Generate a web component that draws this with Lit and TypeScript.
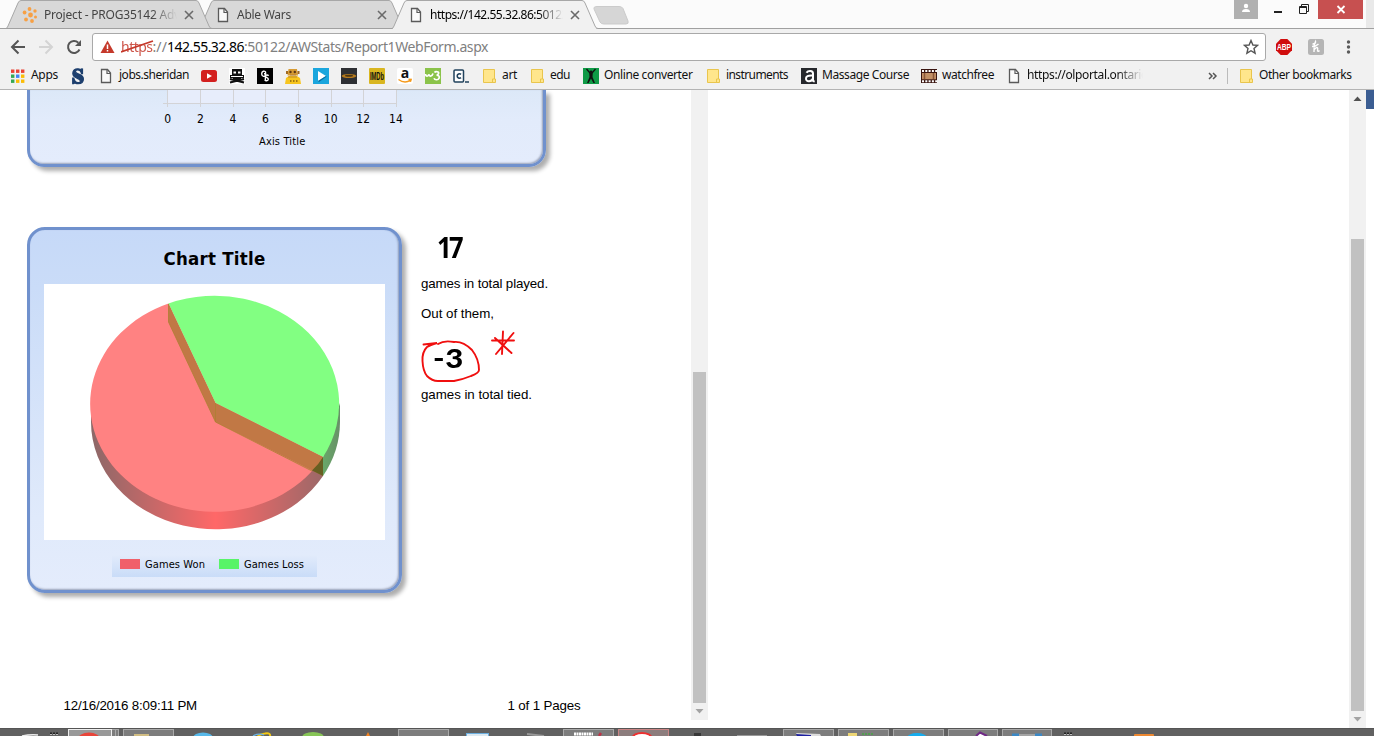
import { LitElement, html, svg, css } from "lit";
import { customElement, property } from "lit/decorators.js";

const UI = '"Noto Sans", "Open Sans", sans-serif';
const TAHOMA = '"DejaVu Sans Condensed", "DejaVu Sans", sans-serif';
const ARIAL = '"Liberation Sans", Arial, sans-serif';

const pen = document.createElement("canvas").getContext("2d")!;

/** One line of text whose tracking is adjusted to fill a given width. */
const label = (text: string, width: number, font: string, cls = "") => {
  pen.font = font;
  const track = (width - pen.measureText(text).width) / text.length;
  return html`<span class="label ${cls}" style="font:${font};letter-spacing:${track.toFixed(3)}px;width:${width}px">${text}</span>`;
};
const ui = (t: string, w: number, cls = "") => label(t, w, `12px ${UI}`, cls);

const shared = css`
  .label { display: block; white-space: pre; flex: none; }
  svg { display: block; flex: none; }
`;

const page = svg`<path d="M3.500 1.500h6l3 3.500v9.500h-9z" fill="#fafafa" stroke="#5a5a5a" stroke-width="1.300"/><path d="M9 1.500V5.500h3.500" fill="none" stroke="#5a5a5a" stroke-width="1.200"/>`;
const folder = svg`<path d="M2.500 1.500h11v9.500h1v3.500h-12z" fill="#ffe68c" stroke="#e9c54d"/><path d="M11.500 14v-3h2" fill="none" stroke="#e9c54d"/>`;

const icons: Record<string, unknown> = {
  page,
  folder,
  apps: svg`${[0, 1, 2].map((r) => [0, 1, 2].map((c) => svg`<rect x=${1 + c * 5} y=${1.5 + r * 5} width="3.400" height="3.400" fill=${["#ea4335", "#ea4335", "#ea4335", "#34a853", "#4285f4", "#fbbc05", "#34a853", "#fbbc05", "#fbbc05"][r * 3 + c]}/>`))}`,
  sheridan: svg`<path d="M12.500 1v4.600h-1C10.800 3 9.500 1.900 7.800 1.900 6.400 1.900 5.500 2.600 5.500 3.600c0 1.100.8 1.600 3.200 2.500 3.300 1.200 4.700 2.400 4.700 4.900 0 2.900-2.100 4.700-5.200 4.700-1.300 0-2.400-.4-3.400-.8l-1.300.7H2.700V10h1c.7 3 2.200 4.700 4.300 4.700 1.500 0 2.400-.7 2.400-1.800 0-1.200-.7-1.700-3.500-2.800C4.100 9 2.800 7.600 2.800 5.300 2.800 2.500 4.800.8 7.700.8c1.200 0 2.300.4 2.900.8L11.700.9z" fill="#1d3f6e" stroke="#1d3f6e" stroke-width="1.200"/>`,
  youtube: svg`<rect x="0" y="2" width="16" height="12" rx="2.500" fill="#d3201f"/><path d="M6 5.200v5.600L11 8z" fill="#fff"/>`,
  skull: svg`<rect width="16" height="16" fill="#fff"/><path d="M3 1h10v6h2v3H1V7h2z" fill="#111"/><path d="M4.500 3.500h2.500v2H4.500zM9 3.500h2.500v2H9zM2 8h12v1H2z" fill="#fff"/><path d="M1 11l14 3.500M15 11l-14 3.500" stroke="#111" stroke-width="2"/><path d="M4 9.500h8v2.500H4z" fill="#111"/>`,
  gs: svg`<rect width="16" height="16" fill="#000"/><path d="M8.800 4.300C7.800 2.300 4.500 3 4.700 6c.2 3 3.300 3 3.900 1V5.800H7M11.600 7.800c-1-1.300-3.300-.8-3 .8.3 1.300 2.800 1 2.700 2.700-.2 2-2.800 1.900-3.500.4M8.600 4l-.3 9" fill="none" stroke="#fff" stroke-width="1.400"/>`,
  robot: svg`<path d="M3.500 1h8.500l1 6.500H2.500z" fill="#d79b33"/><path d="M0 16l1-6 3-2h8l3 2 1 6z" fill="#f7c51e"/><path d="M1 3h2v3H1zM12.500 3h2v3h-2z" fill="#a06a23"/><circle cx="5.500" cy="4" r="1.200" fill="#5d3715"/><circle cx="9.800" cy="4" r="1.200" fill="#5d3715"/><path d="M5 7h6M3 9h9" stroke="#a8702a" stroke-width=".7"/><path d="M5 13h1.500M8 13h1.500M11 13h1.500" stroke="#866010" stroke-width="1.500"/>`,
  play: svg`<rect width="16" height="16" fill="#1ba6dd"/><path d="M5 3v10l8-5z" fill="#fff"/><path d="M5 13l8-5 .5.8L6 14z" fill="#0c6ca0"/>`,
  dark: svg`<rect width="16" height="16" fill="#2d2f33"/><ellipse cx="8" cy="8" rx="7.300" ry="2" fill="#b57a1d"/><ellipse cx="8" cy="7.800" rx="4" ry="1" fill="#4b3512"/>`,
  imdb: svg`<rect width="16" height="16" rx="1" fill="#d9b620"/><text x="1" y="12" font-family="Liberation Sans" font-weight="bold" font-size="10.500" textLength="14" lengthAdjust="spacingAndGlyphs" fill="#111">IMDb</text>`,
  amazon: svg`<rect width="16" height="16" rx="2" fill="#fff"/><text x="3.800" y="10.300" font-family="Open Sans" font-weight="bold" font-size="14" fill="#111">a</text><path d="M1.500 11.500c4 3 8.500 3 12 .7M11.500 11.200l2.700.2-.8 2.500" fill="none" stroke="#f59a1c" stroke-width="1.400"/>`,
  w3: svg`<rect width="16" height="16" fill="#8bc34a"/><path d="M.5 6c.3 3 3 2.700 3.200.2.300 2.500 3.300 2.800 4.300-.7M9.500 4.500c1-1.500 5-1 4 1.200-.5 1.200-1.200 1.500-2 1.500 2 0 3.500 1.200 2.500 3.200-1 2-4.300 1.600-5-.2" fill="none" stroke="#fff" stroke-width="1.700"/>`,
  codec: svg`<rect x="1" y="2" width="9.500" height="12" rx="1" fill="#fff" stroke="#21425c" stroke-width="1.500"/><path d="M8 6.300C6.500 5 4.200 6 4.200 8s2.300 3 3.800 1.700" fill="none" stroke="#21425c" stroke-width="1.600"/><path d="M12 14h4" stroke="#21425c" stroke-width="1.500"/>`,
  converter: svg`<rect width="16" height="16" fill="#0f9a46"/><path d="M3.500 1l3.500 4M12.500 1L9 5" stroke="#111" stroke-width="1.300"/><circle cx="8" cy="3.700" r="1.300" fill="#111"/><path d="M6.200 4.500h3.600L9.500 9l2.500 6h-1.600L8 10.500 5.600 15H4L6.500 9z" fill="#111"/>`,
  massage: svg`<rect width="16" height="16" fill="#26282c"/><path d="M5.500 4.800C7 2.500 12 2.300 12 5.500V12c0 1.200.6 1.500 1.700 1.300M12 7.500C7 7 4.700 8.500 5 11c.4 3 5.500 3 7-.5" fill="none" stroke="#fff" stroke-width="2"/>`,
  film: svg`<rect y="1" width="16" height="14" fill="#3a1510"/><rect x="1" y="5" width="14" height="6.300" fill="#c29066"/><path d="M3.500 5v6M12.500 5v6" stroke="#8a5638" stroke-width="1.500"/><path d="M1 3h15M1 13.300h15" stroke="#fff" stroke-width="2" stroke-dasharray="2 1.300"/>`,
};
const icon = (name: string) => html`<svg width="16" height="16" viewBox="0 0 16 16" overflow="visible">${icons[name]}</svg>`;

@customElement("browser-tab")
class BrowserTab extends LitElement {
  @property() text = "";
  @property() kind = "page";
  @property({ type: Number }) textwidth = 100;
  @property({ type: Boolean }) active = false;
  static styles = [shared, css`
    :host { display: block; width: 206px; height: 29px; margin-right: -13px; position: relative; flex: none; }
    .shape { position: absolute; inset: 0; }
    .row { position: relative; display: flex; align-items: center; height: 30px; padding-left: 16px; }
    .clip { width: 133px; margin-left: 6px; padding-bottom: 1px; overflow: hidden; color: #444; -webkit-mask-image: linear-gradient(90deg, #000 108px, transparent 133px); }
    .on { color: #000; }
    .close { margin-left: 7px; }
  `];
  render() {
    const fill = this.active ? "#f1f1f1" : "#d8d8d8";
    return html`
      <svg class="shape" width="206" height="29"><path d="M0 28.500Q1 28.500 2 26L12 3Q13 .5 15 .5H190Q192 .5 193 3L203 26Q204 28.500 206 28.500" fill=${fill} stroke="#a7a7a7"/>${this.active ? svg`<path d="M1 28.500h203" stroke="#f1f1f1"/>` : svg`<path d="M0 28.500h206" stroke="#a0a0a0"/>`}</svg>
      <div class="row">
        ${this.kind === "page"
          ? icon("page")
          : html`<svg width="16" height="16" viewBox="0 0 16 16" fill="#f7a044">
              <circle cx="8.500" cy="8" r="2.400" /><circle cx="7.500" cy="2" r="1.900" /><circle cx="2.600" cy="5.500" r="1.900" /><circle cx="4" cy="12.500" r="1.900" /><circle cx="10" cy="14" r="1.900" /><circle cx="13.500" cy="10" r="1.500" /><circle cx="13" cy="4" r="1.700" /></svg>`}
        <div class="clip ${this.active ? "on" : ""}">${ui(this.text, this.textwidth)}</div>
        <svg class="close" width="10" height="10"><path d="M1 1l8 8M9 1L1 9" stroke="#6a6a6a" stroke-width="1.600" /></svg>
      </div>`;
  }
}

@customElement("scroll-bar")
class ScrollBar extends LitElement {
  @property({ type: Number }) start = 0;
  @property({ type: Number }) size = 0;
  @property({ type: Boolean }) up = false;
  static styles = [shared, css`
    :host { display: flex; flex-direction: column; align-items: center; width: 17px; background: #f1f1f1; flex: none; }
    .thumb { width: 13px; background: #c1c1c1; }
    .top { width: 17px; }
  `];
  render() {
    return html`
      <div class="top" style="height:${this.start}px">${this.up ? html`<svg width="17" height="17"><path d="M4.500 11l4-4.500 4 4.500z" fill="#505050" /></svg>` : ""}</div>
      <div class="thumb" style="height:${this.size}px"></div>
      <svg width="17" height="17"><path d="M4.500 6h8l-4 4.500z" fill="#a3a3a3" /></svg>`;
  }
}

interface Mark { icon: string; width: number; text?: string; tw?: number; fade?: boolean; }
const marks: Mark[] = [
  { icon: "apps", width: 60, text: "Apps", tw: 27 },
  { icon: "sheridan", width: 28 },
  { icon: "page", width: 103, text: "jobs.sheridan", tw: 70 },
  ...["youtube", "skull", "gs", "robot", "play", "dark", "imdb", "amazon", "w3", "codec"].map((i) => ({ icon: i, width: 28 })),
  { icon: "folder", width: 48, text: "art", tw: 15 },
  { icon: "folder", width: 54, text: "edu", tw: 20 },
  { icon: "converter", width: 122, text: "Online converter", tw: 88.5 },
  { icon: "folder", width: 96, text: "instruments", tw: 62 },
  { icon: "massage", width: 120, text: "Massage Course", tw: 87 },
  { icon: "film", width: 85, text: "watchfree", tw: 52 },
  { icon: "page", width: 196, text: "https://olportal.ontario", tw: 121, fade: true },
];

@customElement("browser-chrome")
class BrowserChrome extends LitElement {
  static styles = [shared, css`
    :host { display: block; height: 90px; background: #f1f1f1; }
    .strip { display: flex; height: 29px; box-sizing: border-box; background: linear-gradient(#a0a0a0, #a0a0a0) bottom / 100% 1px no-repeat #fbfbfb; padding-left: 6px; }
    .t1 { z-index: 2; } .t2 { z-index: 1; } .t3 { z-index: 3; }
    .newtab { margin: 6px 0 0 8px; }
    .win { margin-left: auto; display: flex; }
    .edge { width: 8px; height: 28px; background: #e9e9e9; margin-left: 3px; }
    .toolbar { display: flex; align-items: center; height: 36px; }
    .nav { width: 92px; height: 16px; }
    .omni { display: flex; align-items: center; box-sizing: border-box; width: 1174px; height: 28px; border: 1px solid #a9a9a9; border-radius: 3px; background: #fff; padding-left: 7px; }
    .url { display: flex; margin-left: 6px; padding-bottom: 1px; color: #808080; position: relative; }
    .bad { color: #c5392b; opacity: .85; } .host { color: #000; }
    .slash { position: absolute; left: 0; top: 0; }
    .star { margin: 0 6px 0 auto; }
    .exts { display: flex; align-items: center; gap: 16px; margin-left: 10px; }
    .marks { display: flex; align-items: center; box-sizing: border-box; height: 25px; padding: 0 0 3px 10px; border-bottom: 1px solid #b4b4b4; color: #111; }
    .mark { display: flex; align-items: center; gap: 5px; flex: none; height: 16px; }
    .mark .label { margin-bottom: 2px; }
    .fade { -webkit-mask-image: linear-gradient(90deg, #000 90px, transparent 116px); }
    .sep { width: 1px; height: 16px; background: #bbb; margin: 0 10px 0 9px; }
    .more { margin-left: 6px; }
  `];
  render() {
    return html`
      <div class="strip">
        <browser-tab class="t1" kind="hub" text="Project - PROG35142 Adv" textwidth="136"></browser-tab>
        <browser-tab class="t2" text="Able Wars" textwidth="54"></browser-tab>
        <browser-tab class="t3" active text="https://142.55.32.86:50122" textwidth="138"></browser-tab>
        <svg class="newtab" width="36" height="19"><path d="M1 1.500q1-1 3-1H26q3 0 4 2l5 12.500q1 3-2 3H11q-3 0-4-2L1 3z" fill="#d6d6d6" stroke="#cbcbcb" /></svg>
        <div class="win">
          <svg width="129" height="19">
            <rect width="24" height="19" fill="#b0b0b0" /><circle cx="12" cy="6" r="2.200" fill="#fff" /><path d="M8 12q0-3 4-3t4 3z" fill="#fff" />
            <rect x="40" y="11" width="8" height="2" fill="#222" />
            <path d="M65.500 6.500h7v7h-7zM65 7.500h8M67.500 6V4.500h7v7H73" fill="none" stroke="#222" />
            <rect x="84" width="45" height="19" fill="#c75050" /><path d="M103.500 6l7 7M110.500 6l-7 7" stroke="#fff" stroke-width="1.800" />
          </svg>
          <div class="edge"></div>
        </div>
      </div>
      <div class="toolbar">
        <svg class="nav" width="92" height="16" fill="none" stroke-width="2">
          <path d="M25 8H12.500M18.500 1.500L12 8l6.500 6.500" stroke="#555" />
          <path d="M39 8h12.500M45.500 1.500L52 8l-6.500 6.500" stroke="#d4d4d4" />
          <path d="M79.500 10.500A6 6 0 1 1 78.300 3.700" stroke="#555" /><path d="M81 1v6h-6z" fill="#555" />
        </svg>
        <div class="omni">
          <svg width="15" height="14"><path d="M7.500 .5l7 12.500H.5z" fill="#c5392b" /><path d="M7.500 4.500v4.500M7.500 10v1.600" stroke="#fff" stroke-width="1.500" /></svg>
          <div class="url">
            ${label("https", 31.5, `14px ${UI}`, "bad")}${label("://", 14.5, `14px ${UI}`)}${label("142.55.32.86", 77, `14px ${UI}`, "host")}${label(":50122/AWStats/Report1WebForm.aspx", 244, `14px ${UI}`)}
            <svg class="slash" width="34" height="20"><path d="M0 15L32 4" stroke="#c5392b" stroke-width="1.700" /></svg>
          </div>
          <svg class="star" width="16" height="16"><path d="M8 1.500l1.900 4.500 4.700.4-3.600 3.100 1.100 4.700L8 11.700l-4.100 2.500L5 9.500 1.400 6.400l4.700-.4z" fill="none" stroke="#555" stroke-width="1.400" /></svg>
        </div>
        <div class="exts">
          <svg width="16" height="16" overflow="visible"><path d="M4.700 0h6.600L16 4.700v6.600L11.300 16H4.700L0 11.300V4.700z" fill="#d00d0d" /><text x="1" y="11" font-family="Liberation Sans" font-weight="bold" font-size="8.500" textLength="14" lengthAdjust="spacingAndGlyphs" fill="#fff">ABP</text></svg>
          <svg width="16" height="16"><rect width="16" height="16" rx="2.500" fill="#b5b5b5" /><path d="M4.500 5Q8 5 7.500 2.500Q6 5 6 13M4 7.500Q8 7.500 10.500 5M6.300 10.500Q9.500 7 9.700 9.500L9.500 12q.6 1 2 -.5" fill="none" stroke="#fff" stroke-width="1.400" /></svg>
          <svg width="16" height="16" fill="#5a5a5a"><circle cx="8.500" cy="3" r="1.700" /><circle cx="8.500" cy="8" r="1.700" /><circle cx="8.500" cy="13" r="1.700" /></svg>
        </div>
      </div>
      <div class="marks">
        ${marks.map((m) => html`<div class="mark" style="width:${m.width}px">${icon(m.icon)}${m.text ? ui(m.text, m.tw!, m.fade ? "fade" : "") : ""}</div>`)}
        <svg class="more" width="10" height="10"><path d="M1 2l3 3-3 3M5 2l3 3-3 3" fill="none" stroke="#555" stroke-width="1.500" /></svg>
        <div class="sep"></div>
        <div class="mark">${icon("folder")}${ui("Other bookmarks", 92.5)}</div>
      </div>`;
  }
}

@customElement("report-view")
class ReportView extends LitElement {
  static styles = [shared, css`
    :host { display: block; position: relative; width: 691px; height: 638px; overflow: hidden; color: #000; flex: none; }
    .card { box-sizing: border-box; border: 3px solid #7091cd; box-shadow: 4px 4px 4px rgba(0,0,0,.32), inset -1px -1px 2px rgba(50,60,90,.42); }
    .bar { width: 519px; height: 77px; margin-left: 27px; border-top: 0; border-radius: 0 0 17px 17px; background: linear-gradient(#dce8f8, #e2ebfb 40%, #e4ecfc); }
    .grid { margin-left: 133px; }
    .ticks { display: grid; grid-template-columns: repeat(8, 32.6px); margin-left: 121.5px; justify-items: center; padding-top: 4px; }
    .axis { margin: 9px 0 0 229px; }
    .row { display: flex; margin: 60px 0 0 27px; }
    .pie { width: 375px; height: 366px; border-radius: 18px; background: linear-gradient(#c6d9f8, #cadcf8 16%, #e0eafb 80%, #e4ecfc); display: flex; flex-direction: column; align-items: center; }
    .title { height: 22px; margin-top: 17px; padding-top: 1px; }
    .plot { margin-top: 14px; }
    .legend { display: flex; align-items: center; box-sizing: border-box; width: 205px; height: 22px; margin-top: 15px; padding: 0 8px 4px; background: linear-gradient(#e2ebfb, #c9dcf8); }
    .key { width: 20px; height: 10px; margin-right: 5px; background: #f0606a; }
    .loss { margin-left: 14px; background: #58f468; }
    .facts { display: flex; flex-direction: column; padding-left: 19px; }
    .played { margin: -2px 0 0 15.5px; transform: scaleX(.88); transform-origin: left; }
    .tied { margin: -3px 0 0 12px; transform: scaleX(1.15); transform-origin: left; }
    .big { height: 40px; display: flex; align-items: center; }
    .line { height: 16px; display: flex; align-items: center; }
    .l1 { margin-top: 8px; } .l2 { margin-top: 14px; } .b2 { margin-top: 18px; } .l3 { margin-top: 7px; }
    .foot { display: flex; gap: 310.5px; margin: 105px 0 0 63.5px; }
    .ink { position: absolute; left: 410px; top: 229.5px; }
  `];
  render() {
    const xs = [4.5, 37.5, 70.5, 102.5, 135.5, 168.5, 200.5, 233.5];
    return html`
      <div class="card bar">
        <svg class="grid" width="236" height="18"><rect x="5" width="229" height="13" fill="#e7edfb" /><path d="M0 13.500h234${xs.map((x) => `M${x} 0v17`).join("")}" stroke="#d3d3d6" /></svg>
        <div class="ticks">${[0, 2, 4, 6, 8, 10, 12, 14].map((n) => label(String(n), n > 9 ? 14 : 7, `12px ${TAHOMA}`))}</div>
        <div class="axis">${label("Axis Title", 46.5, `11px ${TAHOMA}`)}</div>
      </div>
      <div class="row">
        <div class="card pie">
          <div class="title">${label("Chart Title", 102, `bold 18.500px ${TAHOMA}`)}</div>
          <svg class="plot" width="341" height="256" viewBox="44 284 341 256">
            <defs><linearGradient id="side" gradientUnits="userSpaceOnUse" x1="91" y1="0" x2="340" y2="0">
              <stop offset="0" stop-color="#8c6868" /><stop offset=".5" stop-color="#ff6868" /><stop offset="1" stop-color="#8c6868" /></linearGradient>
              <linearGradient id="green"><stop stop-color="#68a868" /><stop offset="1" stop-color="#689068" /></linearGradient></defs>
            <rect x="44" y="284" width="341" height="256" fill="#fff" />
            <path d="M91 403V422A124.500 107.500 0 0 0 323 476V457L215.500 403z" fill="url(#side)" />
            <path d="M340 403V422A124.500 107.500 0 0 1 323 476V457z" fill="url(#green)" />
            <path d="M215.500 403L323 457A124.500 108 0 1 1 168.500 303.500z" fill="#ff8282" />
            <path d="M215.500 403L168.500 303.500A124.500 108 0 0 1 323 457z" fill="#82ff82" />
            <path d="M168.500 303.500L215.500 403L323 457V476L215.500 422L168.500 322z" fill="#c17845" />
            <path d="M323 457V476L312 470.500Q319 464 323 457z" fill="#675f22" />
            <path d="M215.500 403V422M168.500 304V322L215.500 422L312 471" fill="none" stroke="#ad8032" stroke-width=".8" />
          </svg>
          <div class="legend"><i class="key"></i>${label("Games Won", 60, `11px ${TAHOMA}`)}<i class="key loss"></i>${label("Games Loss", 60, `11px ${TAHOMA}`)}</div>
        </div>
        <div class="facts">
          <div class="big">${label("17", 27.5, `bold 29px ${UI}`, "played")}</div>
          <div class="line l1">${label("games in total played.", 127, `13.330px ${ARIAL}`)}</div>
          <div class="line l2">${label("Out of them,", 73, `13.330px ${ARIAL}`)}</div>
          <div class="big b2">${label("-3", 27, `900 27px Lato, sans-serif`, "tied")}</div>
          <div class="line l3">${label("games in total tied.", 111, `13.330px ${ARIAL}`)}</div>
        </div>
      </div>
      <div class="foot">${label("12/16/2016 8:09:11 PM", 133.5, `13.330px ${ARIAL}`)}${label("1 of 1 Pages", 73, `13.330px ${ARIAL}`)}</div>
      <svg class="ink" width="120" height="70" viewBox="410 320 120 70" fill="none" stroke="#f00f0f" stroke-width="1.900" stroke-linecap="round">
        <path d="M423.500 344.500L437 343Q430 345 427 347Q422 352 422.500 361Q423 371 427 376Q432 381 438 381H454Q464 379 471 376Q479 373 479 370Q479 359 472 350Q463 341 454 342Q444 340 438 344" />
        <path d="M503 331.500L502 354M492 340.500H514M513.500 333L496 354M495 338L511.500 353" />
      </svg>`;
  }
}

@customElement("task-bar")
class TaskBar extends LitElement {
  static styles = [shared, css`:host { display: block; height: 8px; background: #616161; }`];
  render() {
    const btn = (x: number, w: number, fill = "#7d7d7d", line = "#a9a9a9") => svg`<rect x=${x + 0.5} y="1.500" width=${w} height="9" fill=${fill} stroke=${line}/>`;
    return html`<svg width="1374" height="8">
      <path d="M0 .5h1374" stroke="#555" />
      <path d="M22 8q9-2 16-1" stroke="#eee" stroke-width="1.500" fill="none" />
      ${[50, 1064].map((x) => svg`<path d="M${x} 5.500h8" stroke="#222" stroke-width="2" stroke-dasharray="2 1"/><path d="M${x} 6.500h8" stroke="#bbb" stroke-dasharray="2 1"/>`)}
      ${btn(114, 4)}${btn(111, 4)}${btn(68, 43, "#999", "#eee")}${btn(123, 50)}${btn(398, 50)}${btn(563, 50)}${btn(618, 50, "#8c7d7d", "#cb8585")}${btn(783, 50)}${btn(838, 50)}${btn(893, 50)}${btn(948, 49)}${btn(1002, 49)}
      <ellipse cx="89" cy="11" rx="11" ry="6.500" fill="#e8453a" />
      <rect x="134" y="6" width="15" height="2" fill="#d1bd83" />
      <ellipse cx="203" cy="10" rx="10" ry="5.500" fill="#57b9ea" />
      <path d="M257 9q3-3 8-3.500q6-1 5 3" fill="none" stroke="#f3c811" stroke-width="2" /><path d="M253 8q5-3 11-1" stroke="#6cb7e7" fill="none" stroke-width="1.200" />
      <ellipse cx="313" cy="9.500" rx="11" ry="5.500" fill="#87c557" />
      <path d="M366 8l2-4 2 4z" fill="#f48220" />
      <rect x="466.500" y="5.500" width="22" height="4" fill="#dce9f1" stroke="#6cafe0" />
      <path d="M527 6l17 2" stroke="#999" stroke-width="2" />
      <path d="M574 6h19" stroke="#fff" stroke-width="3" stroke-dasharray="2 .5" /><path d="M599 8l2-3" stroke="#bd3345" stroke-width="2.500" />
      <ellipse cx="642" cy="10" rx="9.500" ry="5" fill="#fff" stroke="#ed3030" stroke-width="2" />
      <rect x="694" y="5" width="7" height="3" fill="#383838" /><rect x="737" y="7" width="30" height="1" fill="#999" />
      <path d="M796 5l24 1 1 2h-23z" fill="#ddd" /><path d="M796 6l15 1v1h-14z" fill="#1d20a0" />
      <rect x="848" y="5" width="9" height="3" fill="#eed775" /><path d="M862 6h12" stroke="#48a645" stroke-dasharray="2 1" stroke-width="1.500" />
      <ellipse cx="917" cy="10" rx="10" ry="5" fill="#15adef" />
      <path d="M976 8l4-3.500 7 3.500" fill="#fff" stroke="#6f2a86" stroke-width="2" />
      <path d="M1018 7h18" stroke="#ccc" stroke-width="1" /><path d="M1012 7h7M1035 7h7" stroke="#3b88c5" stroke-width="3" />
      <rect x="1134" y="6" width="20" height="3" rx="1" fill="#ed8831" />
    </svg>`;
  }
}

@customElement("app-root")
class AppRoot extends LitElement {
  static styles = [shared, css`
    :host { display: flex; flex-direction: column; width: 1374px; height: 736px; overflow: hidden; background: #fff; }
    .body { display: flex; height: 638px; }
    .left { height: 630px; }
    .right { margin-left: auto; height: 638px; }
    .behind { width: 8px; height: 19px; background: #3b5d92; }
  `];
  render() {
    return html`
      <browser-chrome></browser-chrome>
      <div class="body">
        <report-view></report-view>
        <scroll-bar class="left" start="282" size="331"></scroll-bar>
        <scroll-bar class="right" up start="149" size="472"></scroll-bar>
        <div class="behind"></div>
      </div>
      <task-bar></task-bar>`;
  }
}
